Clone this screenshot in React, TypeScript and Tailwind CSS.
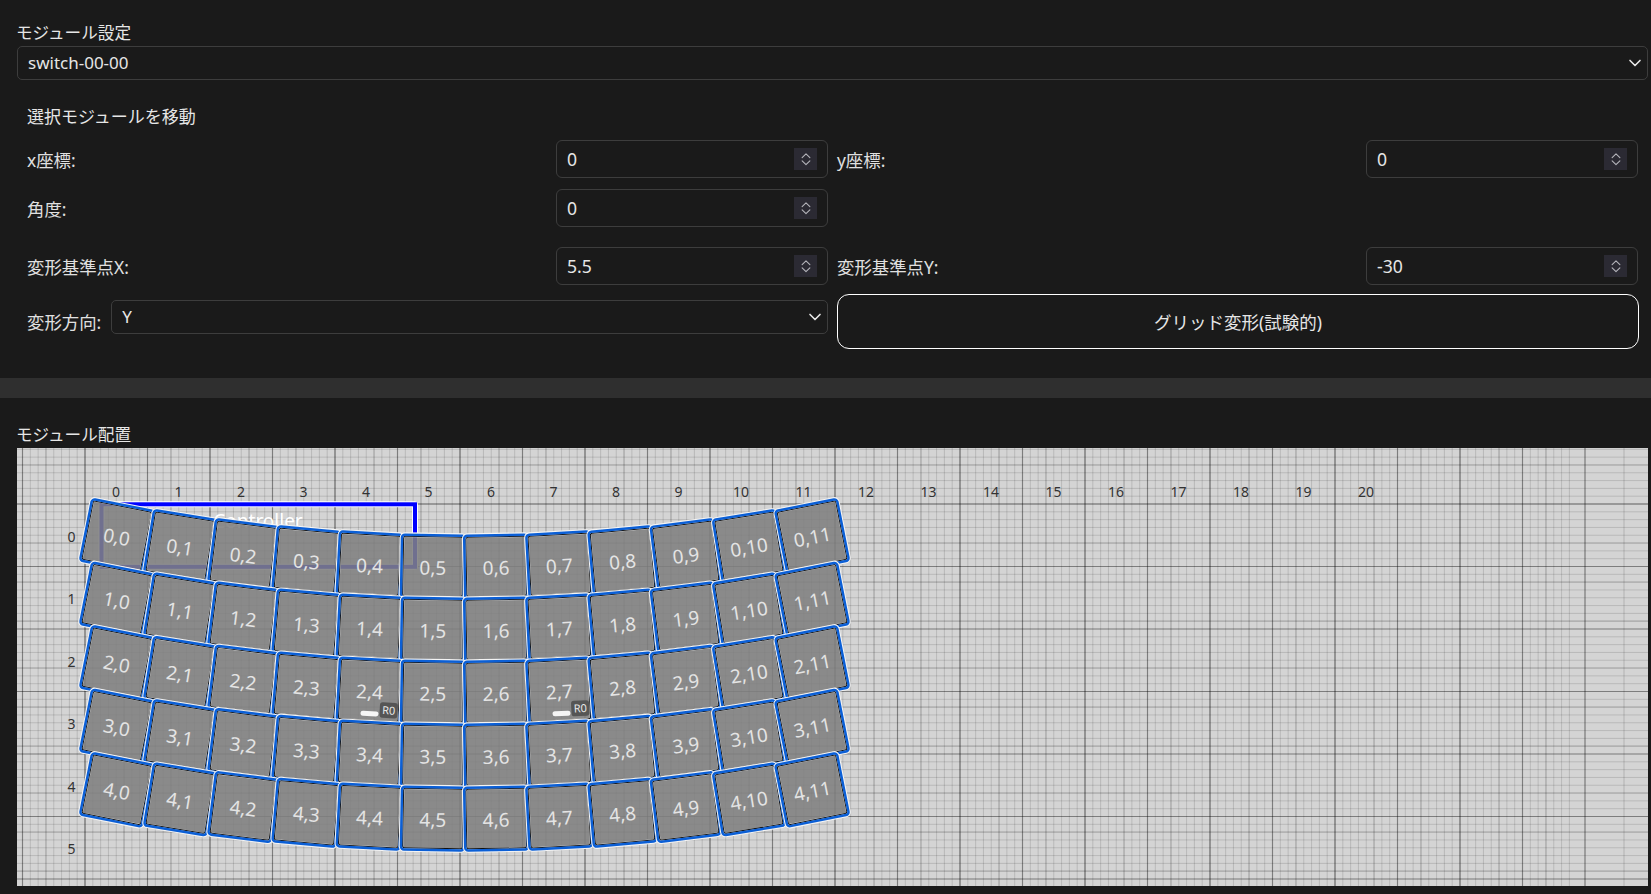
import { ChevronDown, ChevronUp } from "lucide-react";

const KEY_ROWS = [0, 1, 2, 3, 4];
const KEY_COLS = [0, 1, 2, 3, 4, 5, 6, 7, 8, 9, 10, 11];
const AXIS_COLS = Array.from({ length: 21 }, (_, i) => i);

const fineX = Array.from({ length: 200 }, (_, i) => 85 + (i - 9) * 7.8125);
const fineY = Array.from({ length: 57 }, (_, i) => 504 + (i - 7) * 7.8125);
const majorX = Array.from({ length: 26 }, (_, i) => 85 + (i - 1) * 62.5);
const majorY = [504, 566.5, 629, 691.5, 754, 816.5, 879];

const bandX = [46];
for (let x = 85; x <= 1460; x += 125) bandX.push(x, x + 39, x + 86);
bandX.push(1585, 1624);
const bandY = [465, 504, 543, 582, 621, 668, 707, 746, 793, 832, 871];

// grid warp around x=5.5: keys fan out from the gap between col 5 and 6
function keyPose(row: number, col: number) {
  const d = col - 5.5;
  const n = d / 5.5;
  return {
    x: 464.5 + d * 63.2,
    y: 566.8 - d * d * 1.025 + row * (63 + 0.5 * n * n),
    angle: -d * 2.04,
  };
}

function Key({ row, col }: { row: number; col: number }) {
  const p = keyPose(row, col);
  const hasMark = row === 2 && (col === 4 || col === 7);
  return (
    <g transform={`translate(${p.x} ${p.y}) rotate(${p.angle})`}>
      <rect x={-31.4} y={-31.4} width={62.8} height={62.8} rx={3} fill="#808080" fillOpacity={0.88} stroke="#f4f4f4" strokeWidth={4.6} />
      <rect x={-29.8} y={-29.8} width={59.6} height={59.6} rx={2} fill="none" stroke="#111" strokeWidth={1} />
      <rect x={-31.4} y={-31.4} width={62.8} height={62.8} rx={3} fill="none" stroke="#0b5fd6" strokeWidth={2.5} />
      <text x={0} y={8.2} textAnchor="middle" fontSize={19} fill="#e4e4e4">
        {row},{col}
      </text>
      {hasMark && (
        <>
          <rect x={-8} y={20.5} width={18} height={5} rx={2.5} fill="#f5f5f5" />
          <rect x={11} y={11} width={18} height={15.5} rx={3} fill="#555" />
          <text x={20} y={22.8} textAnchor="middle" fontSize={11} fill="#e8e8e8">
            R0
          </text>
        </>
      )}
    </g>
  );
}

function LayoutCanvas() {
  return (
    <svg width={1631} height={438} viewBox="17 448 1631 438" className="block bg-[#d4d4d4]">
      {fineX.map((x) => (
        <line key={x} x1={x} x2={x} y1={448} y2={886} stroke="#000" strokeOpacity={0.13} strokeWidth={1} />
      ))}
      {fineY.map((y) => (
        <line key={y} x1={17} x2={1648} y1={y} y2={y} stroke="#000" strokeOpacity={0.13} strokeWidth={1} />
      ))}
      {bandX.map((x) => (
        <line key={x} x1={x} x2={x} y1={448} y2={886} stroke="#000" strokeOpacity={0.08} strokeWidth={2} />
      ))}
      {bandY.map((y) => (
        <line key={y} x1={17} x2={1648} y1={y} y2={y} stroke="#000" strokeOpacity={0.08} strokeWidth={2} />
      ))}
      {majorX.map((x) => (
        <line key={x} x1={x} x2={x} y1={448} y2={886} stroke="#000" strokeOpacity={0.32} strokeWidth={1.2} />
      ))}
      {majorY.map((y) => (
        <line key={y} x1={17} x2={1648} y1={y} y2={y} stroke="#000" strokeOpacity={0.32} strokeWidth={1.2} />
      ))}

      {AXIS_COLS.map((c) => (
        <text key={c} x={116 + c * 62.5} y={497} textAnchor="middle" fontSize={14} fill="#333">
          {c}
        </text>
      ))}
      {KEY_ROWS.concat(5).map((r) => (
        <text key={r} x={71.5} y={541.8 + r * 62.5} textAnchor="middle" fontSize={14} fill="#333">
          {r}
        </text>
      ))}

      {/* controller outline sits under the keys */}
      <rect x={101.5} y={504.3} width={313.5} height={62.5} rx={1} fill="none" stroke="#fff" strokeWidth={6} />
      <rect x={101.5} y={504.3} width={313.5} height={62.5} fill="none" stroke="#0000ff" strokeWidth={4} />
      <text x={258} y={528} textAnchor="middle" fontSize={19} fill="#fff">
        Controller
      </text>

      {KEY_ROWS.map((r) => KEY_COLS.map((c) => <Key key={`${r}-${c}`} row={r} col={c} />))}
    </svg>
  );
}

function NumberField({ label, value }: { label: string; value: string }) {
  return (
    <div className="flex flex-1 items-center justify-between">
      <span className="pt-[2px] text-[17.4px] text-[#e0e0e0]">{label}</span>
      <div className="relative w-[272px]">
        <input
          type="number"
          defaultValue={value}
          className="block h-[38px] w-full rounded-[6px] border border-[#3d3d3d] bg-transparent pl-[10px] pr-[40px] text-[17.6px] text-[#e6e6e6] outline-none [appearance:textfield] [&::-webkit-inner-spin-button]:appearance-none"
        />
        <div className="absolute right-[11px] top-[8px] flex h-[22px] w-[23px] flex-col items-center justify-center overflow-hidden bg-[#2b2a33] text-[#b4b4ba]">
          <ChevronUp size={18} strokeWidth={1.7} className="-mb-[5px]" />
          <ChevronDown size={18} strokeWidth={1.7} className="-mt-[4px]" />
        </div>
      </div>
    </div>
  );
}

function SelectBox({ value, className }: { value: string; className: string }) {
  return (
    <div className={`relative ${className}`}>
      <select className="block h-[34px] w-full appearance-none rounded-[5px] border border-[#3d3d3d] bg-[#1a1a1a] pl-[10px] text-[17px] text-[#e6e6e6] outline-none">
        <option>{value}</option>
      </select>
      <ChevronDown size={20} strokeWidth={2} className="pointer-events-none absolute right-[3px] top-[7px] text-[#e6e6e6]" />
    </div>
  );
}

export default function App() {
  return (
    <div className="h-[894px] overflow-hidden bg-[#1a1a1a] font-['Noto_Sans','Noto_Sans_CJK_JP',sans-serif] text-[#e6e6e6]">
      <section className="pl-[17px] pr-[3px] pt-[21px]">
        <div className="-ml-[1px] h-[25px] text-[16.6px] leading-[24px]">モジュール設定</div>
        <SelectBox value="switch-00-00" className="w-full" />
      </section>

      <section className="pl-[27px] pr-[13px]">
        <h2 className="mb-[11px] mt-[25px] h-[24px] text-[17px] leading-[24px]">選択モジュールを移動</h2>
        <div className="flex gap-[9px]">
          <NumberField label="x座標:" value="0" />
          <NumberField label="y座標:" value="0" />
        </div>
        <div className="mt-[11px] flex gap-[9px]">
          <NumberField label="角度:" value="0" />
          <div className="flex-1" />
        </div>
        <div className="mt-[20px] flex gap-[9px]">
          <NumberField label="変形基準点X:" value="5.5" />
          <NumberField label="変形基準点Y:" value="-30" />
        </div>
        <div className="-mr-[1px] mt-[9px] flex gap-[9px]">
          <div className="flex w-[801px] flex-none items-start gap-[10px]">
            <span className="mt-[16px] text-[17.4px] leading-[24px] text-[#e0e0e0]">変形方向:</span>
            <SelectBox value="Y" className="mt-[6px] flex-1" />
          </div>
          <button className="h-[55px] flex-1 rounded-[12px] border border-white bg-transparent pt-[2px] text-[17.5px] text-[#e6e6e6]">
            グリッド変形(試験的)
          </button>
        </div>
      </section>

      <div className="mt-[29px] h-[20px] bg-[#2f2f2f]" />

      <section className="pl-[17px] pt-[25px]">
        <div className="-ml-[1px] h-[25px] text-[16.6px] leading-[24px]">モジュール配置</div>
        <LayoutCanvas />
      </section>
    </div>
  );
}
